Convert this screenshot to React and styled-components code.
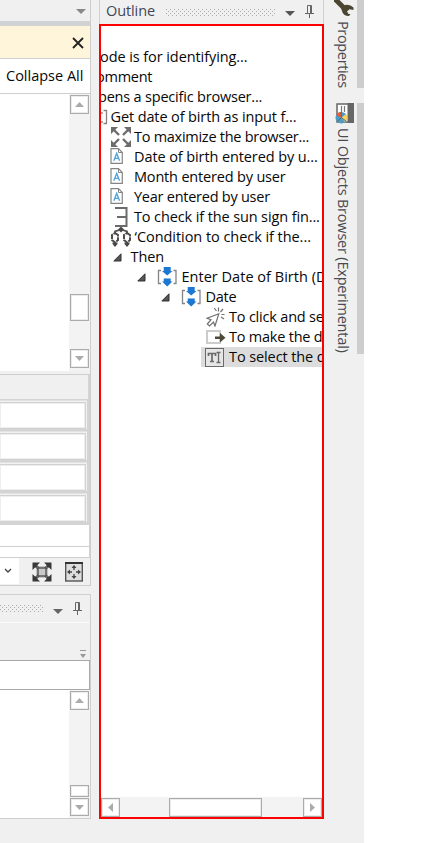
import React from 'react';
import styled, { createGlobalStyle } from 'styled-components';

const Global = createGlobalStyle`
  * { box-sizing: border-box; }
  body { margin: 0; background: #fff; font-family: "Open Sans", "Noto Sans", sans-serif; color: #080808; }
  svg { display: block; flex: none; }
`;

const Workspace = styled.div`
  display: flex; width: 364px; height: 843px; background: #f0f0f0; overflow: hidden;
`;
const LeftColumn = styled.div`
  display: flex; flex-direction: column; width: 91px; height: 818px; flex: none; margin-right: 8px;
`;
const Designer = styled.section`
  display: flex; flex-direction: column; height: 586px; flex: none;
  border-right: 1px solid #cdcdcd; border-bottom: 1px solid #cdcdcd;
`;
const TabStrip = styled.div`
  display: flex; justify-content: flex-end; height: 26px; flex: none; padding: 9px 4px 0 0;
  border-bottom: 5px solid #d0d2d4;
`;
const Notice = styled.div`
  display: flex; justify-content: flex-end; height: 33px; flex: none; padding: 11px 6px 0 0;
  background: #fff5da; border-bottom: 1px solid #d0d0d0;
`;
const ActionBar = styled.div`
  height: 35px; flex: none; padding: 7px 0 0 6px; background: #fff; border-bottom: 1px solid #cfcfcf;
  font-size: 14.5px; line-height: 20px; letter-spacing: 0; white-space: nowrap;
`;
const Canvas = styled.div`
  display: flex; justify-content: flex-end; height: ${p => p.$h}px; flex: none; background: #fff;
`;
const VTrack = styled.div`
  display: flex; flex-direction: column; width: 21px; padding: 1px 1px 0; background: #f3f3f3;
`;
const Knob = styled.div`
  display: flex; align-items: center; justify-content: center; flex: none;
  width: ${p => p.$w || 19}px; height: ${p => p.$h || 19}px; margin: ${p => p.$m || 0};
  background: #fff; border: 1px solid #ababab; box-shadow: inset 0 0 0 1px #ececec;
`;
const Grid = styled.div`
  display: flex; flex-direction: column; height: 151px; flex: none; margin-top: 3px; background: #d4d4d4;
  border-top: 1px solid #cfcfcf; padding-right: 2px;
`;
const GridHead = styled.div`
  height: 25px; flex: none; background: #f0f0f0; border-bottom: 1px solid #d4d4d4;
`;
const Field = styled.div`
  height: 29px; flex: none; margin: 0 1px 2px 0; padding: 1px 1px 1px 0; background: #f1f1f1;
  border-top: 1px solid #e2e2e2;
`;
const FieldBox = styled.div`
  height: 27px; background: #fff; border: 1px solid #d2d2d2; border-left: 0; box-shadow: inset 0 0 0 1px #eee;
`;
const Blank = styled.div`
  height: ${p => p.$h}px; flex: none; background: #fff; border-bottom: 1px solid #cfcfcf;
  border-right: 1px solid #d2d2d2;
`;
const ZoomBar = styled.div`
  display: flex; height: 27px; flex: none;
`;
const Combo = styled.div`
  width: 19px; height: 26px; background: #fff; padding: 10px 0 0 4px; margin-right: 13px;
`;
const ZoomButton = styled.div`
  width: 20px; height: 20px; margin: 4px ${p => p.$gap}px 0 0;
`;
const Output = styled.section`
  display: flex; flex-direction: column; height: 225px; flex: none; margin-top: 8px;
  border: 1px solid #cfcfcf; border-left: 0;
`;
const OutputHead = styled.div`
  display: flex; height: 28px; flex: none; padding-top: 7px; border-bottom: 1px solid #fafafa;
`;
const OutputTools = styled.div`
  display: flex; justify-content: flex-end; height: 37px; flex: none; padding: 27px 4px 0 0;
`;
const OutputInput = styled.div`
  height: 30px; flex: none; background: #fff; border: 1px solid #a8a8a8; border-left: 0;
`;

const Outline = styled.section`
  display: flex; flex-direction: column; width: 225px; flex: none;
`;
const OutlineHead = styled.header`
  display: flex; height: 24px; flex: none; padding: 1px 0 0 6px;
  border-left: 1px solid #cfcfcf; border-right: 1px solid #cfcfcf; color: #404858;
`;
const OutlineTitle = styled.h1`
  width: 60px; margin: 0; font-size: 14.5px; font-weight: 400; line-height: 20px; letter-spacing: -0.1px;
`;
const OutlineBody = styled.div`
  display: flex; flex-direction: column; height: 795px; flex: none; background: #fff;
  border: 2px solid #fe0000; overflow: hidden;
`;
const Tree = styled.div`
  flex: 1; padding-top: 21px; min-height: 0; overflow: hidden;
`;
const TreeRow = styled.div`
  display: flex; align-items: center; height: 20px; margin-left: ${p => p.$x}px; white-space: nowrap;
  background: ${p => (p.$selected ? '#dcdcdc' : 'transparent')};
  padding-left: ${p => (p.$selected ? 4 : 0)}px;
`;
const TreeIcon = styled.span`
  display: flex; flex: none; width: ${p => p.$w}px;
`;
const Label = styled.span`
  font-size: 14.5px; line-height: 20px; letter-spacing: ${p => p.$ls ?? -0.25}px;
`;
const HTrack = styled.div`
  display: flex; height: 20px; flex: none; padding-top: 1px; background: #f3f3f3;
`;

const Sidebar = styled.aside`
  display: flex; flex-direction: column; align-items: flex-end; width: 40px; flex: none;
`;
const SideTab = styled.div`
  display: flex; flex-direction: column; align-items: center; width: 31px; height: ${p => p.$h}px; flex: none;
  margin-bottom: 15px; border-right: 7px solid #cdcdcd;
`;
const SideText = styled.span`
  writing-mode: vertical-rl; font-size: 14.5px; line-height: 20px; margin-top: ${p => p.$top}px;
  letter-spacing: ${p => p.$ls}px; color: #4a4a50; white-space: nowrap; margin-right: 4px;
`;
const SideIcon = styled.span`
  display: flex; height: ${p => p.$h}px; flex: none; margin-left: -2px;
`;
const Spacer = styled.span`
  flex: none; width: ${p => p.$w}px;
`;

const Tri = ({ dir, c = '#ababab', w = 9, h = 5 }) => {
  const up = dir === 'up', down = dir === 'down', left = dir === 'left';
  const d = up ? `M0 ${h}L${w / 2} 0L${w} ${h}Z` : down ? `M0 0H${w}L${w / 2} ${h}Z`
    : left ? `M${w} 0V${h}L0 ${h / 2}Z` : `M0 0V${h}L${w} ${h / 2}Z`;
  return <svg width={w} height={h}><path d={d} fill={c} /></svg>;
};
const Dots = ({ width, id }) => (
  <svg width={width} height="8">
    <defs>
      <pattern id={id} width="4" height="4" patternUnits="userSpaceOnUse">
        <rect width="1" height="1" fill="#aaa" /><rect x="2" y="2" width="1" height="1" fill="#aaa" />
      </pattern>
    </defs>
    <rect width={width} height="7" fill={`url(#${id})`} />
  </svg>
);
const Pin = () => (
  <svg width="9" height="13" fill="none" stroke="#666">
    <path d="M2.5 8V.5H6.5V8M0 8.5H9M4.5 9V13" /><path d="M6 1V8" strokeWidth="2" />
  </svg>
);
const CloseX = () => (
  <svg width="12" height="12" stroke="#222" strokeWidth="1.8"><path d="M1 1L11 11M11 1L1 11" /></svg>
);

const Expand = () => (
  <svg width="20" height="20" stroke="#6d6d6d" strokeWidth="2.4" fill="#6d6d6d">
    <path d="M3 3L8 8M17 3L12 8M3 17L8 12M17 17L12 12" />
    <path stroke="none" d="M0 0H7L0 7ZM20 0V7L13 0ZM0 20V13L7 20ZM20 20H13L20 13Z" />
  </svg>
);
const DocA = () => (
  <svg width="14" height="18">
    <path d="M1 .7H8.5L12.3 4.5V15.3H1Z" fill="#fff" stroke="#858585" strokeWidth="1.2" />
    <path d="M8.5 1V4.5H12" fill="none" stroke="#858585" />
    <path d="M3.8 12.8L6.7 5.4L9.6 12.8M4.8 10.4H8.6" fill="none" stroke="#55a5dd" strokeWidth="1.4" />
  </svg>
);
const Bracket3 = () => (
  <svg width="16" height="20" fill="none" stroke="#6b6b6b" strokeWidth="2">
    <path d="M2 1H13.5V19H2M4 10H14" />
  </svg>
);
const Flow = () => (
  <svg width="20" height="20">
    <path d="M10 2.5L4 4.5V7M10 2.5L16 4.5V7M4 14V19M16 14V19" fill="none" stroke="#555" strokeWidth="1.8" />
    <path d="M10 -.5L13 2.5L10 5.5L7 2.5Z" fill="#484848" />
    <path d="M4 6L7 8V13L4 15.5L1 13V8ZM16 6L19 8V13L16 15.5L13 13V8Z" fill="#fff" stroke="#4c4c4c" strokeWidth="2" strokeDasharray="5 .8" />
    <path d="M1.5 15.5H6.5V17L4 20L1.5 17ZM13.5 15.5H18.5V17L16 20L13.5 17Z" fill="#484848" />
  </svg>
);
const Twisty = () => (
  <svg width="9" height="9"><path d="M8 .8V8H.8Z" fill="#555" stroke="#333" /></svg>
);
const Sequence = () => (
  <svg width="20" height="20">
    <path d="M4 3.5H1.5V16.5H4M16.5 3.5H19V16.5H16.5" fill="none" stroke="#858585" strokeWidth="1.3" />
    <path d="M6.7 0H13.7V4H15.5L10.2 8.5L5 4H6.7ZM6.7 11.5H13.7V14.5H15.5L10.2 19.5L5 14.5H6.7Z" fill="#1c78d3" />
  </svg>
);
const Click = () => (
  <svg width="20" height="20" fill="none" stroke="#707070" strokeWidth="1.2">
    <path d="M12.8 6.8L1 11.3L5 12.7L1.3 17L3.5 19L7.5 15L9 19Z" />
    <path d="M12.5 4.5V.5M10.5 4L8.2 1M14.5 5L17 2M15.5 7.5H18.5M15 10L18 12" />
  </svg>
);
const Exit = () => (
  <svg width="20" height="18">
    <rect x="1" y="3" width="13" height="12" fill="#fff" stroke="#ccc" strokeWidth="2" />
    <path d="M9 8.5H14V5L19.5 9.8L14 14.5V11H9Z" fill="#4e4937" />
  </svg>
);
const TextInput = () => (
  <svg width="19" height="19" fill="none" stroke="#696969">
    <rect x=".5" y=".5" width="18" height="18" fill="#e6e6e6" />
    <path d="M3.5 8V5.5H10.5V8M7 5.5V13.5M5 13.5H9" strokeWidth="1.7" />
    <path d="M11.5 4.5H15.5M13.5 4.5V14.5M11.5 14.5H15.5" strokeWidth="1.3" />
  </svg>
);
const HalfBracket = () => (
  <svg width="8" height="16" fill="none" stroke="#858585" strokeWidth="1.3">
    <path d="M1 3V5M1 12V14M2.5 1.5H5.5V14.5H2.5" />
  </svg>
);
const FitAll = () => (
  <svg width="20" height="20">
    <path d="M4 4L16 16M16 4L4 16" stroke="#383838" strokeWidth="3" />
    <path d="M5 5H15M5 15H15M5 5V15M15 5V15" stroke="#999" />
    <rect x="6" y="6" width="8" height="8" fill="#c9c9c9" stroke="#4a4a4a" strokeWidth="1.3" />
    <path d="M.5 .5H8L.5 8ZM12 .5H19.5V8ZM.5 12V19.5H8ZM19.5 12V19.5H12Z" fill="#383838" />
  </svg>
);
const Overview = () => (
  <svg width="18" height="20">
    <rect x=".7" y="1" width="16.6" height="18" fill="#dedede" stroke="#555" strokeWidth="1.4" />
    <path d="M0 1H18" stroke="#333" strokeWidth="2" />
    <path d="M9 4V8M9 12V16M3 10H7M11 10H15" stroke="#444" strokeWidth="1.3" />
    <path d="M6.5 6L9 3L11.5 6ZM6.5 14L9 17L11.5 14ZM5 7.5L2 10L5 12.5ZM13 7.5L16 10L13 12.5Z" fill="#444" />
  </svg>
);
const Wrench = () => (
  <svg width="20" height="16">
    <path d="M1 -1L10 8" stroke="#4b4632" strokeWidth="5" />
    <path d="M7 8L11 5Q16 4 19.5 7.5V10L15.5 9.3L13 11.5L14.5 14L16.5 14L15 16Q9 16 8 11Z" fill="#4b4632" />
  </svg>
);
const Browser = () => (
  <svg width="19" height="21">
    <rect x="2" y="1" width="16" height="18" fill="#fff" stroke="#666" strokeWidth="1.5" />
    <path d="M12.5 0H19V20H12.5Z" fill="#666" />
    <path d="M6.5 3V9M9.5 3V9" stroke="#777" strokeWidth="1.2" />
    <circle cx="6.3" cy="14.7" r="5.8" fill="#4a9bc8" />
    <path d="M6.3 14.7L1.2 12A5.8 5.8 0 0 1 7 9Z" fill="#f1562f" />
    <path d="M6.3 14.7L11 11A5.8 5.8 0 0 1 10 19Z" fill="#ffd15c" />
    <path d="M6.3 9V14.7L2.5 18.5M6.3 14.7L11 18" fill="none" stroke="#596c75" />
  </svg>
);

const rows = [
  { x: -1, text: 'ode is for identifying...', ls: -0.08 },
  { x: -5, text: 'omment', ls: -0.25 },
  { x: -3, text: 'pens a specific browser...', ls: -0.2 },
  { x: 0, icon: HalfBracket, w: 9.5, text: 'Get date of birth as input f...', ls: -0.12 },
  { x: 10, icon: Expand, w: 23, text: 'To maximize the browser...', ls: -0.27 },
  { x: 9, icon: DocA, w: 24, text: 'Date of birth entered by u...', ls: -0.1 },
  { x: 9, icon: DocA, w: 24, text: 'Month entered by user', ls: -0.18 },
  { x: 9, icon: DocA, w: 24, text: 'Year entered by user', ls: -0.25 },
  { x: 12, icon: Bracket3, w: 21, text: 'To check if the sun sign fin...', ls: -0.12 },
  { x: 10, icon: Flow, w: 23.5, text: '‘Condition to check if the...', ls: -0.05 },
  { x: 12, icon: Twisty, w: 17.5, text: 'Then', ls: -0.1 },
  { x: 36, twisty: true, icon: Sequence, w: 24.5, text: 'Enter Date of Birth (D', ls: 0.02 },
  { x: 60, twisty: true, icon: Sequence, w: 24.5, text: 'Date' },
  { x: 105, icon: Click, w: 23, text: 'To click and se', ls: -0.2 },
  { x: 105, icon: Exit, w: 23, text: 'To make the d', ls: -0.22 },
  { x: 100, icon: TextInput, w: 24, text: 'To select the d', ls: -0.1, selected: true },
];

export default function App() {
  return (
    <>
      <Global />
      <Workspace>
        <LeftColumn>
          <Designer>
            <TabStrip><Tri dir="down" c="#888" w={10} /></TabStrip>
            <Notice><CloseX /></Notice>
            <ActionBar>Collapse All</ActionBar>
            <Canvas $h={277}>
              <VTrack>
                <Knob><Tri dir="up" /></Knob>
                <Knob $h={27} $m="180px 0 28px" />
                <Knob><Tri dir="down" /></Knob>
              </VTrack>
            </Canvas>
            <Grid>
              <GridHead />
              {[0, 1, 2, 3].map(i => <Field key={i}><FieldBox /></Field>)}
            </Grid>
            <Blank $h={22} />
            <Blank $h={11} />
            <ZoomBar>
              <Combo>
                <svg width="8" height="6" fill="none" stroke="#444" strokeWidth="1.4"><path d="M1 1L4 4L7 1" /></svg>
              </Combo>
              <ZoomButton $gap={13}><FitAll /></ZoomButton>
              <ZoomButton $gap={0}><Overview /></ZoomButton>
            </ZoomBar>
          </Designer>
          <Output>
            <OutputHead>
              <Spacer $w={43}><svg width="43" height="14"><g transform="translate(0 3)"><Dots id="dots-output" width={43} /></g></svg></Spacer>
              <Spacer $w={10} />
              <Spacer $w={20}><svg width="10" height="12"><path d="M0 7H10L5 12Z" fill="#666" /></svg></Spacer>
              <Pin />
            </OutputHead>
            <OutputTools>
              <svg width="6" height="8"><path d="M0 .5H6" stroke="#999" /><path d="M0 4H6L3 8Z" fill="#999" /></svg>
            </OutputTools>
            <OutputInput />
            <Canvas $h={128}>
              <VTrack>
                <Knob><Tri dir="up" /></Knob>
                <Knob $h={12} $m="75px 0 1px" />
                <Knob $h={18}><Tri dir="down" /></Knob>
              </VTrack>
            </Canvas>
          </Output>
        </LeftColumn>

        <Outline>
          <OutlineHead>
            <OutlineTitle>Outline</OutlineTitle>
            <Spacer $w={119}><svg width="110" height="18"><g transform="translate(0 8)"><Dots id="dots-outline" width={110} /></g></svg></Spacer>
            <Spacer $w={20}><svg width="10" height="16"><path d="M0 10H10L5 15Z" fill="#555" /></svg></Spacer>
            <svg width="9" height="18"><g transform="translate(0 4)"><Pin /></g></svg>
          </OutlineHead>
          <OutlineBody>
            <Tree>
              {rows.map(({ x, icon: Icon, w, text, ls, twisty, selected }) => (
                <TreeRow key={text} $x={x} $selected={selected}>
                  {twisty && <TreeIcon $w={20}><Twisty /></TreeIcon>}
                  {Icon && <TreeIcon $w={w}><Icon /></TreeIcon>}
                  <Label $ls={ls}>{text}</Label>
                </TreeRow>
              ))}
            </Tree>
            <HTrack>
              <Knob><Tri dir="left" w={5} h={9} /></Knob>
              <Knob $w={93} $m="0 41px 0 49px" />
              <Knob><Tri dir="right" w={5} h={9} /></Knob>
            </HTrack>
          </OutlineBody>
        </Outline>

        <Sidebar>
          <SideTab $h={88}>
            <SideIcon $h={16}><Wrench /></SideIcon>
            <SideText $top={5} $ls={-0.35}>Properties</SideText>
          </SideTab>
          <SideTab $h={251}>
            <SideIcon $h={21}><Browser /></SideIcon>
            <SideText $top={4} $ls={-0.2}>UI Objects Browser (Experimental)</SideText>
          </SideTab>
        </Sidebar>
      </Workspace>
    </>
  );
}
